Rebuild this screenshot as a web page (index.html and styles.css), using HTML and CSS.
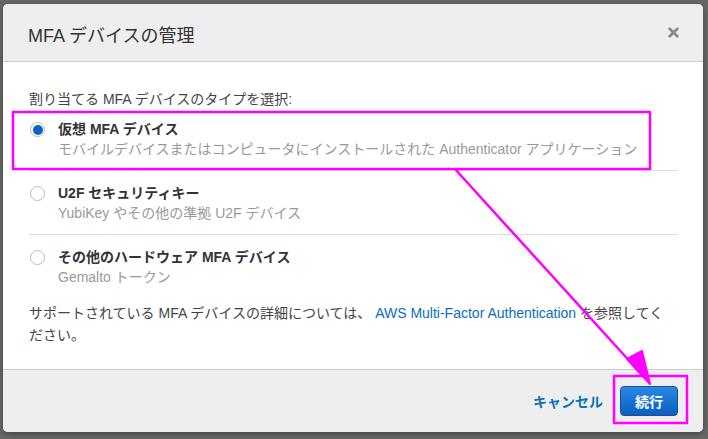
FILE: index.html
```html
<!DOCTYPE html>
<html lang="ja">
<head>
    <meta charset="UTF-8">
    <meta name="viewport" content="width=device-width, initial-scale=1.0">
    <title>MFA デバイスの管理</title>
    <link rel="stylesheet" href="styles.css">
</head>
<body>

    <div class="modal">
        <div class="modal-header">
            <h3>MFA デバイスの管理</h3>
            <button class="btn-close" aria-label="閉じる">
                <svg width="11" height="11" viewBox="0 0 11 11">
                    <path d="M1.7 1.7 L9.3 9.3 M9.3 1.7 L1.7 9.3" stroke="#8a8a8a" stroke-width="2.8" stroke-linecap="round"/>
                </svg>
            </button>
        </div>

        <div class="modal-body">
            <p class="prompt">割り当てる MFA デバイスのタイプを選択:</p>

            <ul class="options">
                <li class="option selected">
                    <span class="radio"></span>
                    <div>
                        <div class="opt-title">仮想 MFA デバイス</div>
                        <div class="opt-desc">モバイルデバイスまたはコンピュータにインストールされた Authenticator アプリケーション</div>
                    </div>
                </li>
                <li class="option">
                    <span class="radio"></span>
                    <div>
                        <div class="opt-title">U2F セキュリティキー</div>
                        <div class="opt-desc">YubiKey やその他の準拠 U2F デバイス</div>
                    </div>
                </li>
                <li class="option">
                    <span class="radio"></span>
                    <div>
                        <div class="opt-title">その他のハードウェア MFA デバイス</div>
                        <div class="opt-desc">Gemalto トークン</div>
                    </div>
                </li>
            </ul>

            <p class="note"><span>サポートされている MFA デバイスの詳細については、</span> <a href="#">AWS Multi-Factor Authentication</a> <span>を参照してく</span><span>ださい。</span></p>
        </div>

        <div class="modal-footer">
            <a href="#" class="btn-cancel">キャンセル</a>
            <button class="btn-primary">続行</button>
        </div>
    </div>

    <!-- hand drawn markup on top of the screenshot -->
    <svg class="marks" width="708" height="439" viewBox="0 0 708 439">
        <g fill="none" stroke="#ff00ff" stroke-width="2.5" stroke-linejoin="round">
            <rect x="13" y="112" width="637" height="57"/>
            <rect x="614" y="376" width="73" height="47"/>
            <path d="M455 169 L644 377"/>
        </g>
        <path d="M627 359 L650 384 L642 351 Z" fill="#ff00ff" stroke="#ff00ff" stroke-width="2" stroke-linejoin="round"/>
    </svg>

</body>
</html>
```

FILE: styles.css
```css
body {
    margin: 0;
    padding: 4px 5px 6px 3px;
    background-color: #686868;
    font-family: "Liberation Sans", "Noto Sans CJK JP", sans-serif;
    color: #444;
}

.modal {
    width: 700px;
    background: white;
    border-radius: 5px;
    overflow: hidden;
    box-shadow: 0 2px 6px rgba(0, 0, 0, 0.35);
}

.modal-header {
    height: 58px;
    box-sizing: border-box;
    padding: 3px 24px 0 25px;
    display: flex;
    align-items: center;
    justify-content: space-between;
    background: #eeeeee;
    border-bottom: 1px solid #cccccc;
}

.modal-header h3 {
    margin: 0;
    font-size: 18px;
    font-weight: normal;
    color: #333;
}

.btn-close {
    border: none;
    background: none;
    padding: 0;
    margin-top: -3px;
    width: 11px;
    height: 11px;
    display: flex;
    cursor: pointer;
}

.modal-body {
    padding: 29px 25px 23px 26px;
    font-size: 14px;
}

.prompt {
    margin: 0;
    line-height: 16px;
}

.options {
    list-style: none;
    margin: 0;
    padding: 0;
}

.option {
    display: flex;
    align-items: flex-start;
    padding: 12px 0 11px;
    border-bottom: 1px solid #dddddd;
}

.option:last-child {
    border-bottom: none;
}

.radio {
    width: 13px;
    height: 13px;
    margin: 3px 13px 0 1px;
    border: 1px solid #bbbbbb;
    border-radius: 50%;
    background: white;
    box-sizing: content-box;
    display: flex;
    align-items: center;
    justify-content: center;
    flex-shrink: 0;
}

.option.selected .radio::after {
    content: "";
    width: 10px;
    height: 10px;
    border-radius: 50%;
    background: #0a64c8;
}

.opt-title {
    font-weight: bold;
    line-height: 20px;
    color: #333;
}

.opt-desc {
    line-height: 20px;
    color: #999;
}

.note {
    margin: 4px 6px 0 0;
    line-height: 22px;
}

.note a {
    color: #0a6ebd;
    text-decoration: none;
}

.modal-footer {
    height: 63px;
    box-sizing: border-box;
    padding: 0 25px 0 0;
    display: flex;
    align-items: center;
    justify-content: flex-end;
    gap: 17px;
    background: #eeeeee;
    border-top: 1px solid #cccccc;
}

.btn-cancel {
    color: #0a6ebd;
    font-weight: bold;
    font-size: 14px;
    text-decoration: none;
}

.btn-primary {
    width: 58px;
    height: 30px;
    border: 1px solid #1a4f8c;
    border-radius: 4px;
    background: linear-gradient(#2a87e6, #0a5fc0);
    color: white;
    font-family: inherit;
    font-weight: bold;
    font-size: 14px;
    cursor: pointer;
}

.marks {
    position: absolute;
    top: 0;
    left: 0;
    pointer-events: none;
}
```
